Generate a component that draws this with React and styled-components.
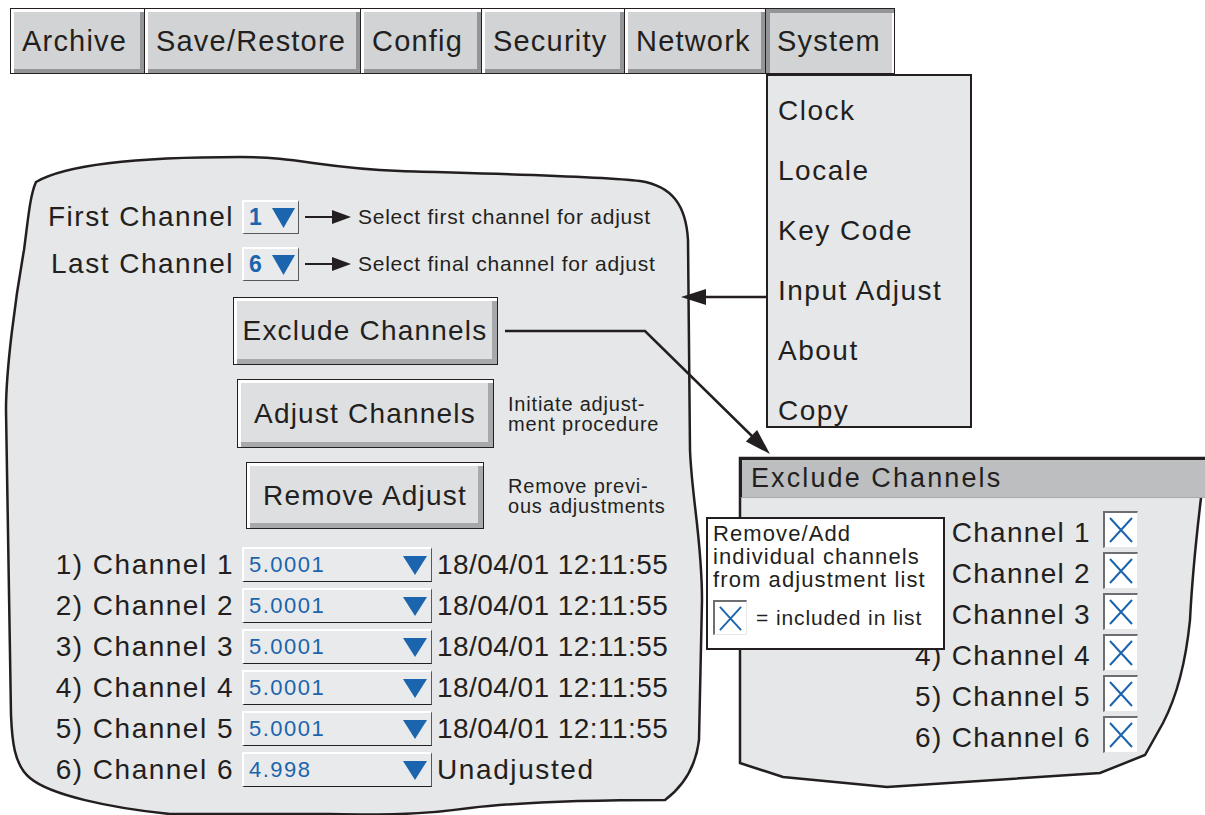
import styled, { createGlobalStyle } from 'styled-components';

const INK = '#231f20';
const PANEL = '#e6e7e8';
const TAB = '#d1d3d4';
const SHADE = '#939598';
const BLUE = '#1b64ae';

const GlobalStyle = createGlobalStyle`
  html, body {
    margin: 0;
    padding: 0;
    background: #fff;
  }
  body {
    font-family: "Liberation Sans", Arial, Helvetica, sans-serif;
    color: ${INK};
  }
`;

const tabs = [
  { label: 'Archive', w: 135 },
  { label: 'Save/Restore', w: 216 },
  { label: 'Config', w: 121 },
  { label: 'Security', w: 143 },
  { label: 'Network', w: 141 },
  { label: 'System', w: 129, active: true },
];

const menuItems = ['Clock', 'Locale', 'Key Code', 'Input Adjust', 'About', 'Copy'];

// rows 1-3 of the exclude list sit under the callout, so their "n)" is hidden
const channels = [
  { n: 1, value: '5.0001', stamp: '18/04/01 12:11:55', covered: true },
  { n: 2, value: '5.0001', stamp: '18/04/01 12:11:55', covered: true },
  { n: 3, value: '5.0001', stamp: '18/04/01 12:11:55', covered: true },
  { n: 4, value: '5.0001', stamp: '18/04/01 12:11:55' },
  { n: 5, value: '5.0001', stamp: '18/04/01 12:11:55' },
  { n: 6, value: '4.998', stamp: 'Unadjusted', plain: true },
];

const DownTriangle = ({ w = 24, h = 19 }) => (
  <svg width={w} height={h} viewBox={`0 0 ${w} ${h}`}>
    <polygon points={`0,0 ${w},0 ${w / 2},${h}`} fill={BLUE} />
  </svg>
);

const Cross = ({ size = 26 }) => (
  <svg width={size} height={size + 2} viewBox="0 0 26 28">
    <path d="M2 2 L24 26 M24 2 L2 26" stroke={BLUE} strokeWidth="2" fill="none" />
  </svg>
);

const PointerArrow = () => (
  <svg width="46" height="14" viewBox="0 0 46 14">
    <line x1="0" y1="7" x2="30" y2="7" stroke={INK} strokeWidth="2" />
    <polygon points="27,0 46,7 27,14" fill={INK} />
  </svg>
);

const App = () => {
  return (
    <>
      <GlobalStyle />
      <Canvas>
        <MainPanel>
          <Outline width="705" height="665" viewBox="0 150 705 665">
            <path
              d="M 36 182 C 70 162, 160 157, 240 157 C 300 157, 320 168, 400 171 C 500 174, 600 176, 640 181 C 672 186, 686 205, 688 240 L 690 450 C 692 500, 702 540, 702 600 L 699 740 C 696 765, 685 785, 665 800 C 600 800, 530 801, 470 808 C 420 815, 380 815, 330 814 L 170 814 C 110 808, 50 795, 30 778 C 14 765, 12 740, 11 715 L 6 410 C 6 370, 15 300, 24 250 C 28 220, 30 195, 36 182 Z"
              fill={PANEL}
              stroke={INK}
              strokeWidth="2.5"
            />
          </Outline>
          <MainBody>
            <PickList>
              <PickRow>
                <RowLabel>First Channel</RowLabel>
                <MiniSelect>
                  <SelectValue>1</SelectValue>
                  <DownTriangle w={23} h={20} />
                </MiniSelect>
                <PointerWrap>
                  <PointerArrow />
                </PointerWrap>
                <Note>Select first channel for adjust</Note>
              </PickRow>
              <PickRow>
                <RowLabel>Last Channel</RowLabel>
                <MiniSelect>
                  <SelectValue>6</SelectValue>
                  <DownTriangle w={23} h={20} />
                </MiniSelect>
                <PointerWrap>
                  <PointerArrow />
                </PointerWrap>
                <Note>Select final channel for adjust</Note>
              </PickRow>
            </PickList>

            <ActionList>
              <ActionRow>
                <Button $w={265} $h={68}>Exclude Channels</Button>
              </ActionRow>
              <ActionRow>
                <Button $w={257} $h={69}>Adjust Channels</Button>
                <SideNote>
                  Initiate adjust-
                  <br />
                  ment procedure
                </SideNote>
              </ActionRow>
              <ActionRow>
                <Button $w={238} $h={67}>Remove Adjust</Button>
                <SideNote>
                  Remove previ-
                  <br />
                  ous adjustments
                </SideNote>
              </ActionRow>
            </ActionList>

            <ChannelList>
              {channels.map((c) => (
                <ChannelRow key={c.n}>
                  <RowLabel>
                    {c.n}) Channel {c.n}
                  </RowLabel>
                  <ValueField>
                    <FieldValue>{c.value}</FieldValue>
                    <DownTriangle w={24} h={19} />
                  </ValueField>
                  <Stamp $spacing={c.plain ? 1.6 : 0.45}>{c.stamp}</Stamp>
                </ChannelRow>
              ))}
            </ChannelList>
          </MainBody>
        </MainPanel>

        <ExcludePanel>
          <Outline width="465" height="357" viewBox="740 458 465 357">
            <path
              d="M 740 458 L 1212 458 L 1201 498 C 1196 540, 1192 580, 1190 620 C 1185 670, 1175 700, 1163 723 L 1145 755 L 1100 773 L 887 787 L 783 777 L 740 763 Z"
              fill={PANEL}
              stroke={INK}
              strokeWidth="2.5"
            />
          </Outline>
          <TitleBar>Exclude Channels</TitleBar>
          <ExcludeBody>
            {channels.map((c) => (
              <ExcludeRow key={c.n}>
                <ExcludeLabel>{c.covered ? `Channel ${c.n}` : `${c.n}) Channel ${c.n}`}</ExcludeLabel>
                <Check>
                  <Cross />
                </Check>
              </ExcludeRow>
            ))}
          </ExcludeBody>
        </ExcludePanel>

        <Callout>
          <CalloutText>
            Remove/Add
            <br />
            individual channels
            <br />
            from adjustment list
          </CalloutText>
          <LegendRow>
            <Check $small>
              <Cross size={25} />
            </Check>
            <LegendText>= included in list</LegendText>
          </LegendRow>
        </Callout>

        <TabBar>
          {tabs.map((t, i) => (
            <Tab key={t.label} $w={t.w} $first={i === 0} $active={t.active}>
              {t.label}
            </Tab>
          ))}
        </TabBar>

        <Menu>
          {menuItems.map((m) => (
            <MenuItem key={m}>{m}</MenuItem>
          ))}
        </Menu>

        <Connectors width="1205" height="815" viewBox="0 0 1205 815">
          <line x1="766" y1="297" x2="700" y2="297" stroke={INK} strokeWidth="2.5" />
          <polygon points="681,297 706,289 706,305" fill={INK} />
          <polyline points="505,331 645,331 756,440" fill="none" stroke={INK} strokeWidth="2.5" />
          <polygon points="770,454 745.9,441.5 757.1,430.1" fill={INK} />
        </Connectors>
      </Canvas>
    </>
  );
};

const Canvas = styled.div`
  position: relative;
  width: 1205px;
  height: 815px;
  overflow: hidden;
  background: #fff;
`;

const TabBar = styled.div`
  position: absolute;
  left: 10px;
  top: 8px;
  display: flex;
  z-index: 3;
`;
const Tab = styled.div`
  box-sizing: border-box;
  width: ${(p) => p.$w}px;
  height: 66px;
  display: flex;
  align-items: center;
  padding-left: 11px;
  background: ${TAB};
  border: 1px solid ${INK};
  border-left-width: ${(p) => (p.$first ? 1 : 0)}px;
  box-shadow: ${(p) =>
    p.$active ? `inset 4px 4px 0 ${SHADE}, inset -2px 0 0 #fff` : `inset 3px 3px 0 #fff, inset -4px -4px 0 ${SHADE}`};
  font-size: 29px;
  letter-spacing: 1.2px;
  white-space: nowrap;
`;

const Menu = styled.div`
  position: absolute;
  left: 766px;
  top: 74px;
  width: 206px;
  height: 354px;
  box-sizing: border-box;
  border: 2px solid ${INK};
  background: ${PANEL};
  padding-top: 5px;
  z-index: 3;
`;
const MenuItem = styled.div`
  height: 60px;
  line-height: 60px;
  padding-left: 10px;
  font-size: 28px;
  letter-spacing: 1.5px;
`;

const MainPanel = styled.div`
  position: absolute;
  left: 0;
  top: 150px;
  width: 705px;
  height: 665px;
  z-index: 1;
`;
const Outline = styled.svg`
  position: absolute;
  left: 0;
  top: 0;
  overflow: visible;
`;
const MainBody = styled.div`
  position: relative;
  padding-top: 50px;
  display: flex;
  flex-direction: column;
`;

const PickList = styled.div`
  display: flex;
  flex-direction: column;
  gap: 13px;
`;
const PickRow = styled.div`
  display: flex;
  align-items: center;
  height: 34px;
`;
const RowLabel = styled.div`
  width: 234px;
  flex: none;
  text-align: right;
  font-size: 28px;
  letter-spacing: 1.5px;
  white-space: nowrap;
`;
const MiniSelect = styled.div`
  box-sizing: border-box;
  margin-left: 8px;
  width: 57px;
  height: 34px;
  display: flex;
  align-items: center;
  gap: 10px;
  padding-left: 5px;
  background: #e9eaeb;
  border-top: 2px solid #fff;
  border-left: 2px solid #fff;
  border-right: 1.5px solid #58595b;
  border-bottom: 1.5px solid #58595b;
`;
const SelectValue = styled.span`
  color: ${BLUE};
  font-size: 23px;
  font-weight: 700;
`;
const PointerWrap = styled.span`
  display: flex;
  margin-left: 6px;
`;
const Note = styled.span`
  margin-left: 7px;
  font-size: 21px;
  letter-spacing: 0.75px;
  white-space: nowrap;
`;

const ActionList = styled.div`
  margin-top: 16px;
  display: flex;
  flex-direction: column;
  gap: 14px;
`;
const ActionRow = styled.div`
  display: grid;
  grid-template-columns: 266px auto;
  column-gap: 10px;
  align-items: center;
  margin-left: 232px;
`;
const Button = styled.div`
  box-sizing: border-box;
  justify-self: center;
  width: ${(p) => p.$w}px;
  height: ${(p) => p.$h}px;
  display: flex;
  align-items: center;
  justify-content: center;
  background: #dedfe0;
  border: 1.5px solid ${INK};
  box-shadow: inset 3px 3px 0 #fff, inset -5px -5px 0 #a7a9ac;
  font-size: 28px;
  letter-spacing: 1.2px;
  white-space: nowrap;
`;
const SideNote = styled.div`
  font-size: 20px;
  line-height: 20px;
  letter-spacing: 0.8px;
  white-space: nowrap;
`;

const ChannelList = styled.div`
  margin-top: 18px;
  display: flex;
  flex-direction: column;
  gap: 6px;
`;
const ChannelRow = styled.div`
  display: flex;
  align-items: center;
  height: 35px;
`;
const ValueField = styled.div`
  box-sizing: border-box;
  margin-left: 8px;
  width: 190px;
  height: 35px;
  display: flex;
  align-items: center;
  justify-content: space-between;
  padding: 0 4px 0 5px;
  background: #e9eaeb;
  border-top: 2px solid #fff;
  border-left: 2px solid #fff;
  border-right: 1.5px solid #58595b;
  border-bottom: 1.5px solid ${INK};
`;
const FieldValue = styled.span`
  color: ${BLUE};
  font-size: 22px;
  letter-spacing: 1.5px;
`;
const Stamp = styled.span`
  margin-left: 5px;
  font-size: 28px;
  letter-spacing: ${(p) => p.$spacing}px;
  white-space: nowrap;
`;

const ExcludePanel = styled.div`
  position: absolute;
  left: 740px;
  top: 458px;
  width: 465px;
  height: 357px;
  z-index: 2;
`;
const TitleBar = styled.div`
  position: relative;
  box-sizing: border-box;
  height: 40px;
  display: flex;
  align-items: center;
  padding-left: 9px;
  background: #bcbec0;
  border-top: 2px solid ${INK};
  border-left: 2px solid ${INK};
  border-bottom: 1px solid #a7a9ac;
  font-size: 27px;
  letter-spacing: 2.1px;
  white-space: nowrap;
`;
const ExcludeBody = styled.div`
  position: relative;
  padding-top: 11px;
  display: flex;
  flex-direction: column;
  gap: 4px;
`;
const ExcludeRow = styled.div`
  display: grid;
  grid-template-columns: 351px 35px;
  column-gap: 12px;
  align-items: center;
  height: 37px;
`;
const ExcludeLabel = styled.div`
  text-align: right;
  font-size: 28px;
  letter-spacing: 1.3px;
  padding-top: 8px;
  white-space: nowrap;
`;
const Check = styled.div`
  box-sizing: border-box;
  width: ${(p) => (p.$small ? 34 : 35)}px;
  height: ${(p) => (p.$small ? 35 : 37)}px;
  display: flex;
  align-items: center;
  justify-content: center;
  background: #fff;
  border-top: 2px solid #6d6e71;
  border-left: 2px solid #6d6e71;
  border-right: 1px solid #e6e7e8;
  border-bottom: 1px solid #e6e7e8;
`;

const Callout = styled.div`
  position: absolute;
  left: 706px;
  top: 517px;
  width: 239px;
  height: 133px;
  box-sizing: border-box;
  padding: 3px 0 0 5px;
  background: #fff;
  border: 2px solid ${INK};
  z-index: 4;
`;
const CalloutText = styled.div`
  font-size: 22px;
  line-height: 23px;
  letter-spacing: 1.1px;
  white-space: nowrap;
`;
const LegendRow = styled.div`
  margin-top: 9px;
  display: flex;
  align-items: center;
  gap: 9px;
`;
const LegendText = styled.span`
  font-size: 21px;
  letter-spacing: 0.9px;
  white-space: nowrap;
`;

const Connectors = styled.svg`
  position: absolute;
  left: 0;
  top: 0;
  pointer-events: none;
  z-index: 5;
`;

export default App;
